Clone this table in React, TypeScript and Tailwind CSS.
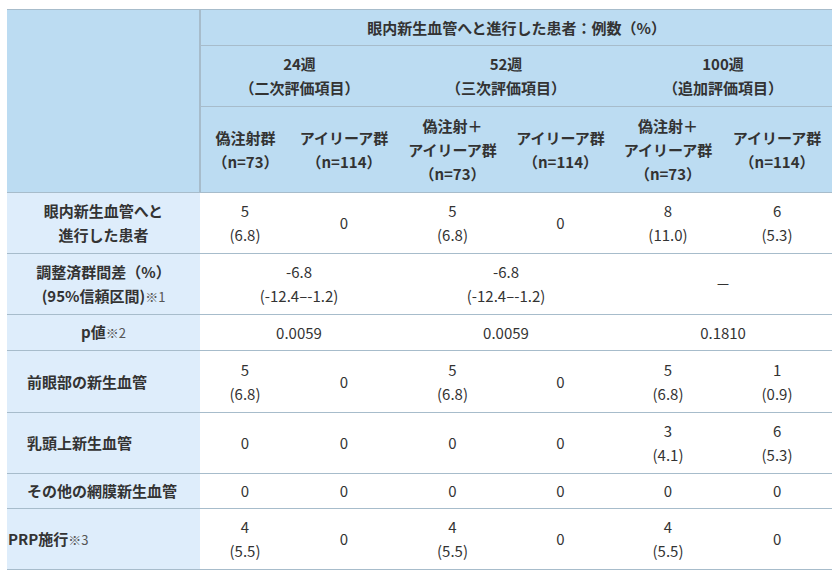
import React from "react";

const font = { fontFamily: '"Noto Sans CJK JP", "Noto Sans", sans-serif' };

type Cell = { lines: string[]; span?: number };

const rows: { label: React.ReactNode; align: "center" | "indent" | "left"; h: string; cells: Cell[] }[] = [
  {
    label: (
      <>
        眼内新生血管へと
        <br />
        進行した患者
      </>
    ),
    align: "center",
    h: "h-[61px]",
    cells: [
      { lines: ["5", "(6.8)"] },
      { lines: ["0"] },
      { lines: ["5", "(6.8)"] },
      { lines: ["0"] },
      { lines: ["8", "(11.0)"] },
      { lines: ["6", "(5.3)"] },
    ],
  },
  {
    label: (
      <>
        調整済群間差（%）
        <br />
        (95%信頼区間)<Note>※1</Note>
      </>
    ),
    align: "center",
    h: "h-[61px]",
    cells: [
      { lines: ["-6.8", "(-12.4–-1.2)"], span: 2 },
      { lines: ["-6.8", "(-12.4–-1.2)"], span: 2 },
      { lines: ["－"], span: 2 },
    ],
  },
  {
    label: (
      <>
        p値<Note>※2</Note>
      </>
    ),
    align: "center",
    h: "h-[36px]",
    cells: [
      { lines: ["0.0059"], span: 2 },
      { lines: ["0.0059"], span: 2 },
      { lines: ["0.1810"], span: 2 },
    ],
  },
  {
    label: "前眼部の新生血管",
    align: "indent",
    h: "h-[62px]",
    cells: [
      { lines: ["5", "(6.8)"] },
      { lines: ["0"] },
      { lines: ["5", "(6.8)"] },
      { lines: ["0"] },
      { lines: ["5", "(6.8)"] },
      { lines: ["1", "(0.9)"] },
    ],
  },
  {
    label: "乳頭上新生血管",
    align: "indent",
    h: "h-[61px]",
    cells: [
      { lines: ["0"] },
      { lines: ["0"] },
      { lines: ["0"] },
      { lines: ["0"] },
      { lines: ["3", "(4.1)"] },
      { lines: ["6", "(5.3)"] },
    ],
  },
  {
    label: "その他の網膜新生血管",
    align: "indent",
    h: "h-[35px]",
    cells: [
      { lines: ["0"] },
      { lines: ["0"] },
      { lines: ["0"] },
      { lines: ["0"] },
      { lines: ["0"] },
      { lines: ["0"] },
    ],
  },
  {
    label: (
      <>
        PRP施行<Note>※3</Note>
      </>
    ),
    align: "left",
    h: "h-[61px]",
    cells: [
      { lines: ["4", "(5.5)"] },
      { lines: ["0"] },
      { lines: ["4", "(5.5)"] },
      { lines: ["0"] },
      { lines: ["4", "(5.5)"] },
      { lines: ["0"] },
    ],
  },
];

function Note({ children }: { children: React.ReactNode }) {
  return <span className="text-[13px] font-normal text-[#555]">{children}</span>;
}

function alignClass(a: "center" | "indent" | "left") {
  if (a === "center") return "text-center";
  if (a === "indent") return "text-left pl-[20px]";
  return "text-left pl-[1px]";
}

export default function App() {
  return (
    <div className="bg-white w-[840px] h-[577px] pt-[9px] pl-[7px]" style={font}>
      <table className="border-collapse table-fixed w-[825px] text-[15px] leading-[24px] text-[#333]">
        <colgroup>
          <col className="w-[193px]" />
          <col className="w-[90px]" />
          <col className="w-[108px]" />
          <col className="w-[109px]" />
          <col className="w-[107px]" />
          <col className="w-[108px]" />
          <col className="w-[110px]" />
        </colgroup>
        <thead className="bg-[#bcdcf2] font-bold">
          <tr className="h-[36px] border-t border-[#a7bccb]">
            <th rowSpan={3} className="border-r-2 border-[#a7bccb] border-b"></th>
            <th colSpan={6} className="border-b border-[#a7bccb] font-bold">
              眼内新生血管へと進行した患者：例数（%）
            </th>
          </tr>
          <tr className="h-[61px]">
            <th colSpan={2} className="border-b border-[#a7bccb] font-bold">
              24週
              <br />
              （二次評価項目）
            </th>
            <th colSpan={2} className="border-b border-[#a7bccb] font-bold">
              52週
              <br />
              （三次評価項目）
            </th>
            <th colSpan={2} className="border-b border-[#a7bccb] font-bold">
              100週
              <br />
              （追加評価項目）
            </th>
          </tr>
          <tr className="h-[86px] border-b border-[#a7bccb]">
            <th className="font-bold">
              偽注射群
              <br />
              （n=73）
            </th>
            <th className="font-bold">
              アイリーア群
              <br />
              （n=114）
            </th>
            <th className="font-bold">
              偽注射＋
              <br />
              アイリーア群
              <br />
              （n=73）
            </th>
            <th className="font-bold">
              アイリーア群
              <br />
              （n=114）
            </th>
            <th className="font-bold">
              偽注射＋
              <br />
              アイリーア群
              <br />
              （n=73）
            </th>
            <th className="font-bold">
              アイリーア群
              <br />
              （n=114）
            </th>
          </tr>
        </thead>
        <tbody>
          {rows.map((r, i) => (
            <tr key={i} className={`${r.h} border-b border-[#a7bccb]`}>
              <th className={`bg-[#deedfb] font-bold ${alignClass(r.align)}`}>{r.label}</th>
              {r.cells.map((c, j) => (
                <td key={j} colSpan={c.span} className="text-center">
                  {c.lines.map((l, k) => (
                    <div key={k}>{l}</div>
                  ))}
                </td>
              ))}
            </tr>
          ))}
        </tbody>
      </table>
    </div>
  );
}
